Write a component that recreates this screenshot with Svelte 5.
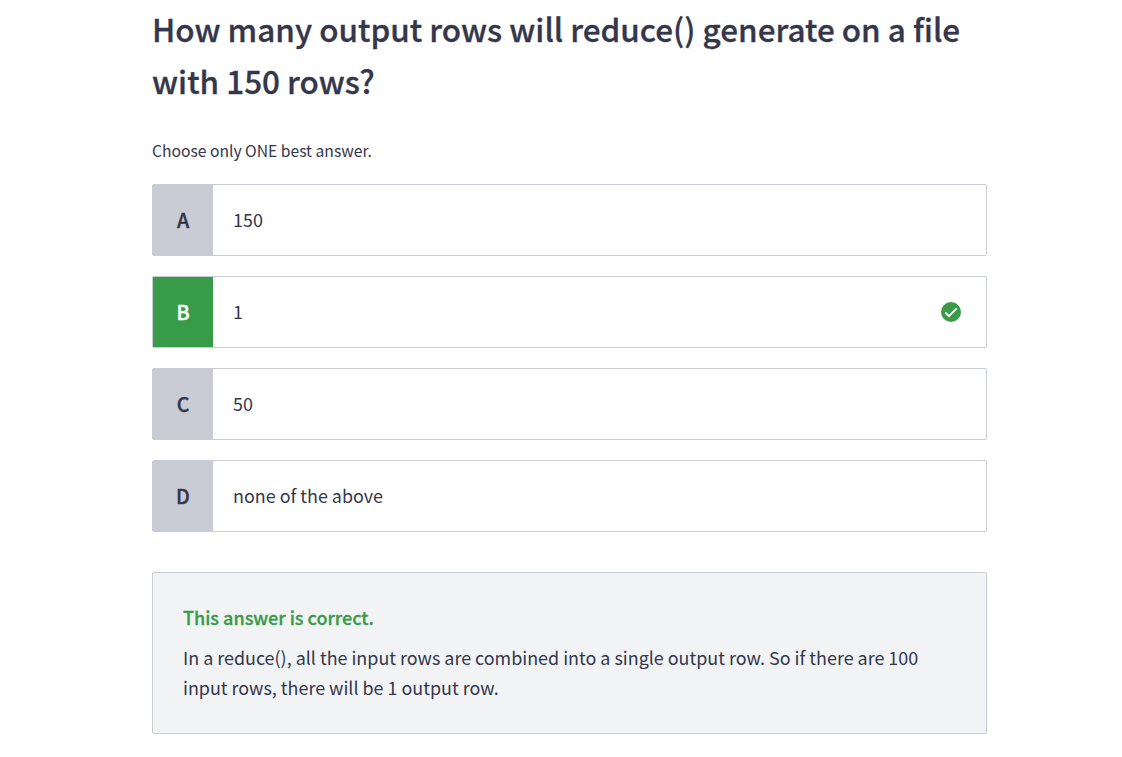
<script>
  const options = [
    { key: 'A', text: '150', correct: false },
    { key: 'B', text: '1', correct: true },
    { key: 'C', text: '50', correct: false },
    { key: 'D', text: 'none of the above', correct: false }
  ];
</script>

<main>
  <h1>How many output rows will reduce() generate on a file<br />with 150 rows?</h1>
  <p class="hint">Choose only ONE best answer.</p>
  <ul>
    {#each options as o}
      <li>
        <div class="key" class:correct={o.correct}>{o.key}</div>
        <div class="text">{o.text}</div>
        {#if o.correct}
          <svg width="20" height="20" viewBox="0 0 20 20" aria-hidden="true">
            <circle cx="10" cy="10" r="10" fill="#389b48" />
            <path d="M4.3 10.5l3.6 3.6 7.8-7.8" fill="none" stroke="#fff" stroke-width="1.9" />
          </svg>
        {/if}
      </li>
    {/each}
  </ul>
  <section>
    <h2>This answer is correct.</h2>
    <p>In a reduce(), all the input rows are combined into a single output row. So if there are 100<br />input rows, there will be 1 output row.</p>
  </section>
</main>

<style>
  :global(body) { background: #fff; }
  main {
    box-sizing: border-box;
    width: 835px;
    margin-left: 152px;
    padding-top: 3px;
    color: #34374c;
    font-family: "Noto Sans CJK SC", "Noto Sans", sans-serif;
    font-size: 17.92px;
    white-space: nowrap;
  }
  h1 { margin: 0; font-size: 31.46px; line-height: 52px; font-weight: 500; -webkit-text-stroke: 0.3px; }
  .hint { margin: 34px 0 0; font-size: 15.67px; line-height: 20px; }
  ul { list-style: none; margin: 23px 0 0; padding: 0; display: flex; flex-direction: column; gap: 20px; }
  li {
    box-sizing: border-box; height: 72px; display: flex; align-items: center;
    border: 1px solid #c9ccd5; border-radius: 2px; padding-right: 25px;
  }
  .key {
    box-sizing: border-box; padding-bottom: 2px;
    width: 60px; height: 70px; display: flex; align-items: center; justify-content: center;
    background: #c9ccd5; font-weight: 500; font-size: 19.7px; -webkit-text-stroke: 0.4px;
  }
  .key.correct { background: #389b48; color: #fff; }
  .text { flex: 1; padding: 0 0 2px 20px; }
  section {
    box-sizing: border-box; height: 162px; margin-top: 40px; padding: 29px 30px;
    background: #f1f3f5; border: 1px solid #c9ccd5; border-radius: 2px; line-height: 30px;
  }
  h2 { margin: 0 0 10px; font-size: 18px; line-height: 30px; font-weight: 500; color: #389b48; -webkit-text-stroke: 0.3px; }
  section p { margin: 0; }
</style>
